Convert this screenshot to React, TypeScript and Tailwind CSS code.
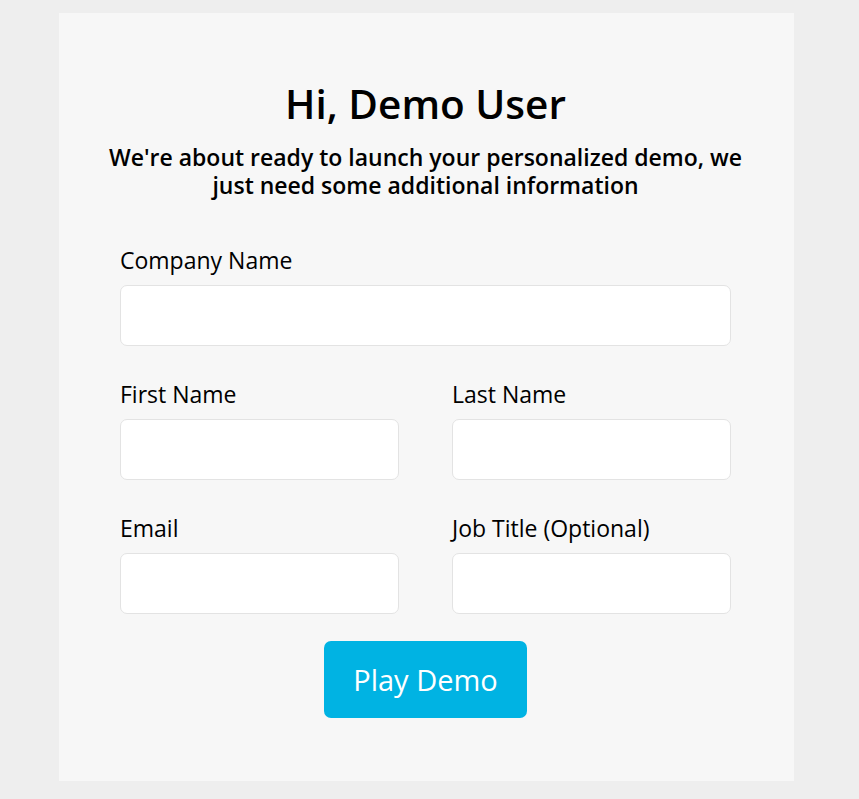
import React from "react";

function Field({ label, className = "" }: { label: string; className?: string }) {
  return (
    <div className={"flex flex-col " + className}>
      <label className="text-[23px] leading-[30px] text-black mb-[10px]">{label}</label>
      <input
        type="text"
        className="h-[61px] w-full rounded-[7px] border border-[#e3e3e3] bg-white px-3 outline-none"
      />
    </div>
  );
}

export default function App() {
  return (
    <div
      className="min-h-[799px] w-full bg-[#eeeeee] pt-[13px] pb-[18px]"
      style={{ fontFamily: '"Open Sans", "Noto Sans", sans-serif' }}
    >
      <div className="ml-[59px] w-[735px] h-[768px] bg-[#f7f7f7] pl-[61px] pr-[63px] pt-[64px]">
        <h1 className="text-center text-[40.5px] leading-[54px] font-semibold text-black">Hi, Demo User</h1>
        <p className="mt-[12px] -mx-[16px] text-center text-[23px] leading-[28px] font-semibold text-black">
          We're about ready to launch your personalized demo, we just need some additional information
        </p>
        <div className="mt-[46px] flex flex-col gap-[33px]">
          <Field label="Company Name" />
          <div className="grid grid-cols-[279px_279px] justify-between">
            <Field label="First Name" />
            <Field label="Last Name" />
          </div>
          <div className="grid grid-cols-[279px_279px] justify-between">
            <Field label="Email" />
            <Field label="Job Title (Optional)" />
          </div>
        </div>
        <div className="mt-[27px] flex justify-center">
          <button className="h-[77px] w-[203px] rounded-[7px] bg-[#00b3e3] text-[29px] text-white">
            Play Demo
          </button>
        </div>
      </div>
    </div>
  );
}
